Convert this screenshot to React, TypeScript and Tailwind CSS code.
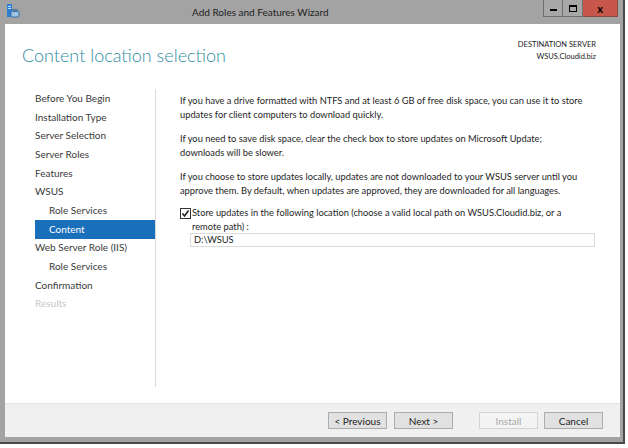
import React from "react"

const NAV = [
  { label: "Before You Begin", indent: false },
  { label: "Installation Type", indent: false },
  { label: "Server Selection", indent: false },
  { label: "Server Roles", indent: false },
  { label: "Features", indent: false },
  { label: "WSUS", indent: false },
  { label: "Role Services", indent: true },
  { label: "Content", indent: true, active: true },
  { label: "Web Server Role (IIS)", indent: false },
  { label: "Role Services", indent: true },
  { label: "Confirmation", indent: false },
  { label: "Results", indent: false, disabled: true },
]

function AppIcon() {
  return (
    <svg width="14" height="16" viewBox="0 0 14 16">
      <rect x="1" y="1" width="5" height="13" fill="#2f7fd0" />
      <rect x="2" y="3" width="3" height="1" fill="#bfe0ff" />
      <rect x="2" y="5" width="3" height="1" fill="#bfe0ff" />
      <rect x="5" y="8" width="8" height="6" rx="1" fill="#9fc3e6" stroke="#3d6fa3" strokeWidth="1" />
      <rect x="7" y="6.5" width="4" height="2" fill="none" stroke="#3d6fa3" strokeWidth="1" />
    </svg>
  )
}

function FooterButton({ label, disabled }: { label: string; disabled?: boolean }) {
  return (
    <button
      className={
        "h-[17px] w-[59px] border text-[10px] leading-none " +
        (disabled
          ? "border-[#d4d4d4] bg-[#f4f4f4] text-[#a8a8a8]"
          : "border-[#acacac] bg-[#e1e1e1] text-[#222]")
      }
    >
      {label}
    </button>
  )
}

export default function App() {
  return (
    <div className="h-[448px] w-[628px] bg-white" style={{ fontFamily: 'Lato, "Open Sans", sans-serif' }}>
      <div className="flex h-[444px] w-[625px] flex-col border-r-2 border-b-2 border-[#4a4a4a] bg-[#a3a3a3] pl-[5px] pr-[3px] pb-[5px]">
        {/* Title bar */}
        <div className="relative flex h-[24px] shrink-0 items-start">
          <div className="pt-[3px] pl-[1px]">
            <AppIcon />
          </div>
          <div className="absolute left-[187px] top-[5px] text-[10px] leading-[14px] text-[#1e1e1e]">
            Add Roles and Features Wizard
          </div>
          <div className="absolute right-[2px] top-0 flex h-[17px]">
            <div className="flex w-[20px] items-end justify-center border border-t-0 border-[#6f6f6f] bg-[#a7a7a7] pb-[5px]">
              <div className="h-[2px] w-[7px] bg-black" />
            </div>
            <div className="flex w-[20px] items-center justify-center border border-t-0 border-l-0 border-[#6f6f6f] bg-[#a7a7a7]">
              <div className="h-[7px] w-[8px] border border-t-2 border-black" />
            </div>
            <div className="flex w-[35px] items-center justify-center border border-t-0 border-l-0 border-[#8a4a40] bg-[#c7574a] text-[11px] font-bold leading-none text-black">
              x
            </div>
          </div>
        </div>

        {/* Client area */}
        <div className="flex min-h-0 flex-1 flex-col bg-white">
          <div className="flex h-[56px] shrink-0 items-start justify-between pr-[24px]">
            <div className="pl-[17px] pt-[22px] text-[18px] font-light leading-none text-[#2f8ea3]">
              Content location selection
            </div>
            <div className="pt-[15px] text-right text-[7.5px] leading-[12px] text-[#222]">
              <div>DESTINATION SERVER</div>
              <div>WSUS.Cloudid.biz</div>
            </div>
          </div>

          <div className="flex min-h-0 flex-1">
            {/* Nav */}
            <div className="w-[151px] shrink-0 pl-[30px] pt-[9px] pb-[16px]">
              <div className="h-full border-r border-[#dadada]">
                {NAV.map((item, i) => (
                  <div
                    key={i}
                    className={
                      "flex h-[18.7px] items-center text-[10px] " +
                      (item.indent ? "pl-[14px] " : "") +
                      (item.active
                        ? "bg-[#1a6fbb] text-white"
                        : item.disabled
                          ? "text-[#c8c8c8]"
                          : "text-[#3a3a3a]")
                    }
                  >
                    {item.label}
                  </div>
                ))}
              </div>
            </div>

            {/* Content */}
            <div className="flex-1 whitespace-nowrap pl-[24px] pt-[14px] text-[9.3px] leading-[14px] text-[#1e1e1e]">
              <p>
                If you have a drive formatted with NTFS and at least 6 GB of free disk space, you can use it to store
                <br />
                updates for client computers to download quickly.
              </p>
              <p className="mt-[10px]">
                If you need to save disk space, clear the check box to store updates on Microsoft Update;
                <br />
                downloads will be slower.
              </p>
              <p className="mt-[10px]">
                If you choose to store updates locally, updates are not downloaded to your WSUS server until you
                <br />
                approve them. By default, when updates are approved, they are downloaded for all languages.
              </p>
              <div className="mt-[8px] flex items-start">
                <div className="mt-[2px] flex h-[11px] w-[11px] shrink-0 items-center justify-center border border-[#333] bg-white">
                  <svg width="9" height="9" viewBox="0 0 9 9">
                    <path d="M1.5 4.5 L3.5 7 L7.5 1.5" fill="none" stroke="#222" strokeWidth="1.6" />
                  </svg>
                </div>
                <div className="pl-[1px]">
                  Store updates in the following location (choose a valid local path on WSUS.Cloudid.biz, or a
                  <br />
                  remote path) :
                </div>
              </div>
              <div className="ml-[10px] mr-[25px] mt-[-1px] flex h-[14px] items-center border border-[#dcdcdc] pl-[3px]">
                D:\WSUS
              </div>
            </div>
          </div>

          {/* Footer */}
          <div className="flex h-[34px] shrink-0 items-center border-t border-[#e3e3e3] bg-[#f0f0f0] pr-[17px]">
            <div className="flex-1" />
            <div className="flex gap-[7px]">
              <FooterButton label="< Previous" />
              <FooterButton label="Next >" />
            </div>
            <div className="ml-[26px] flex gap-[6px]">
              <FooterButton label="Install" disabled />
              <FooterButton label="Cancel" />
            </div>
          </div>
        </div>
      </div>
    </div>
  )
}
